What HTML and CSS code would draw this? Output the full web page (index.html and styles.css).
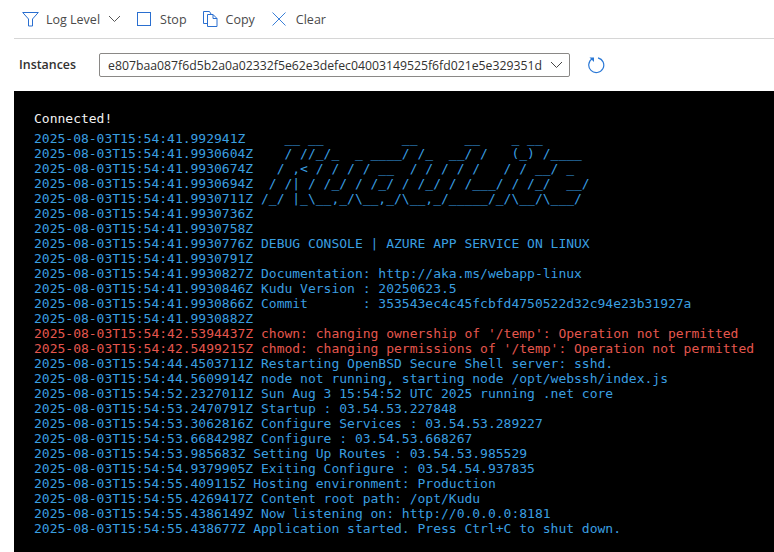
FILE: index.html
```
<!DOCTYPE html>
<html lang="en">
<head>
<meta charset="utf-8">
<title>Log stream</title>
<link rel="stylesheet" href="styles.css">
</head>
<body>
<div class="toolbar">
  <button class="tool tool-log">
    <svg class="icon" width="17" height="15" viewBox="0 0 17 15"><path d="M.7.500h15.600l-5.800 6.500v7h-4v-7z" fill="none" stroke="#2a6fd0" stroke-width="1"/></svg>
    <span>Log Level</span>
    <svg class="chev" width="13" height="8" viewBox="0 0 13 8"><path d="M1 1l5.500 5.500L12 1" fill="none" stroke="#555" stroke-width="1"/></svg>
  </button>
  <button class="tool tool-stop">
    <svg class="icon" width="14" height="14" viewBox="0 0 14 14"><rect x="0.500" y="0.500" width="13" height="13" fill="none" stroke="#2a6fd0"/></svg>
    <span>Stop</span>
  </button>
  <button class="tool tool-copy">
    <svg class="icon" width="15" height="16" viewBox="0 0 15 16"><path d="M4.500 12.500h-4V.5h6l1.500 2.500M4.500 3.500h5.500l4 4v8h-9.500zM10 3.500v4h4" fill="none" stroke="#2a6fd0"/></svg>
    <span>Copy</span>
  </button>
  <button class="tool tool-clear">
    <svg class="icon" width="14" height="14" viewBox="0 0 14 14"><path d="M.5.500l13 13M13.500.500l-13 13" fill="none" stroke="#3b80d8"/></svg>
    <span>Clear</span>
  </button>
</div>
<div class="instances">
  <label class="inst-label">Instances</label>
  <div class="select">
    <span class="select-value">e807baa087f6d5b2a0a02332f5e62e3defec04003149525f6fd021e5e329351d</span>
    <svg width="13" height="8" viewBox="0 0 13 8"><path d="M1 1l5.500 5.500L12 1" fill="none" stroke="#444" stroke-width="1"/></svg>
  </div>
  <svg class="refresh" width="18" height="18" viewBox="0 0 18 18"><path d="M5.500 2.600A7.500 7.500 0 1 0 11 1.800" fill="none" stroke="#2a78d6" stroke-width="1.200"/><path d="M2.500 1.500h4.500v4.500z" fill="#2a78d6"/></svg>
</div>
<div class="terminal">
<pre class="connected">Connected!</pre>
<pre class="log">2025-08-03T15:54:41.992941Z     __ __          __      __    _ __
2025-08-03T15:54:41.9930604Z    / //_/_  _ ____/ /_  __/ /   (_) /____
2025-08-03T15:54:41.9930674Z   / ,&lt; / / / / __  / / / / /   / / __/ _
2025-08-03T15:54:41.9930694Z  / /| / /_/ / /_/ / /_/ / /___/ / /_/  __/
2025-08-03T15:54:41.9930711Z /_/ |_\__,_/\__,_/\__,_/_____/_/\__/\___/
2025-08-03T15:54:41.9930736Z
2025-08-03T15:54:41.9930758Z
2025-08-03T15:54:41.9930776Z DEBUG CONSOLE | AZURE APP SERVICE ON LINUX
2025-08-03T15:54:41.9930791Z
2025-08-03T15:54:41.9930827Z Documentation: http://aka.ms/webapp-linux
2025-08-03T15:54:41.9930846Z Kudu Version : 20250623.5
2025-08-03T15:54:41.9930866Z Commit       : 353543ec4c45fcbfd4750522d32c94e23b31927a
2025-08-03T15:54:41.9930882Z
<span class="err">2025-08-03T15:54:42.5394437Z chown: changing ownership of '/temp': Operation not permitted
2025-08-03T15:54:42.5499215Z chmod: changing permissions of '/temp': Operation not permitted</span>
2025-08-03T15:54:44.4503711Z Restarting OpenBSD Secure Shell server: sshd.
2025-08-03T15:54:44.5609914Z node not running, starting node /opt/webssh/index.js
2025-08-03T15:54:52.2327011Z Sun Aug 3 15:54:52 UTC 2025 running .net core
2025-08-03T15:54:53.2470791Z Startup : 03.54.53.227848
2025-08-03T15:54:53.3062816Z Configure Services : 03.54.53.289227
2025-08-03T15:54:53.6684298Z Configure : 03.54.53.668267
2025-08-03T15:54:53.985683Z Setting Up Routes : 03.54.53.985529
2025-08-03T15:54:54.9379905Z Exiting Configure : 03.54.54.937835
2025-08-03T15:54:55.409115Z Hosting environment: Production
2025-08-03T15:54:55.4269417Z Content root path: /opt/Kudu
2025-08-03T15:54:55.4386149Z Now listening on: http://0.0.0.0:8181
2025-08-03T15:54:55.438677Z Application started. Press Ctrl+C to shut down.</pre>
</div>
</body>
</html>
```
FILE: styles.css
```
html, body {
  margin: 0;
  height: 100%;
  overflow: hidden;
  background: #fff;
}
body {
  display: flex;
  flex-direction: column;
  font-family: "Open Sans", "Noto Sans", sans-serif;
  font-size: 12.500px;
  color: #323130;
}
.toolbar {
  display: flex;
  align-items: center;
  height: 39px;
  margin-left: 14px;
  padding-left: 8px;
  box-sizing: border-box;
  border-bottom: 1px solid #d6d6d6;
  flex: none;
}
.tool {
  display: flex;
  align-items: center;
  padding: 0;
  border: 0;
  background: none;
  font: inherit;
  color: #4a4a4a;
  height: 38px;
}
.icon { flex: none; }
.tool-log .icon { margin-right: 7px; }
.tool-log .chev { margin-left: 8px; margin-right: 0; }
.tool-stop { margin-left: 16px; }
.tool-stop .icon { margin-right: 9px; }
.tool-copy { margin-left: 16px; }
.tool-copy .icon { margin-right: 8px; }
.tool-clear { margin-left: 17px; }
.tool-clear .icon { margin-right: 10px; }
.instances {
  display: flex;
  align-items: center;
  height: 52px;
  padding-left: 19px;
  box-sizing: border-box;
  flex: none;
}
.inst-label {
  width: 80px;
  margin-bottom: 2px;
  font-weight: 600;
  font-size: 12.400px;
  color: #323130;
}
.select {
  display: flex;
  align-items: center;
  justify-content: space-between;
  box-sizing: border-box;
  width: 471px;
  height: 24px;
  padding: 0 6px 0 8px;
  border: 1px solid #8a8886;
  border-radius: 2px;
  color: #323130;
  white-space: nowrap;
}
.select-value {
  font-size: 12.250px;
}
.refresh { margin-left: 17px; }
.terminal {
  flex: 1;
  margin-left: 14px;
  background: #000;
  padding-top: 20px;
  min-height: 0;
  overflow: hidden;
}
.terminal pre {
  margin: 0 0 0 20px;
  font-family: "DejaVu Sans Mono", monospace;
  font-size: 13px;
  line-height: 15px;
}
.connected { color: #f2f2f2; margin-bottom: 5px !important; }
.log { color: #3a9fe0; }
.err { color: #e5574e; }
```
